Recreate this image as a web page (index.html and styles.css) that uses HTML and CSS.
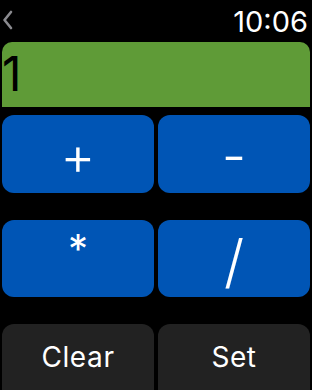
FILE: index.html
```html
<!DOCTYPE html>
<html lang="en">
  <head>
    <meta charset="utf-8">
    <title>Calc</title>
    <link rel="stylesheet" href="styles.css">
  </head>
  <body>
    <div class="screen">
      <div class="topbar">
        <svg class="back" width="12" height="20" viewBox="0 0 12 20">
          <polyline points="9,2 2.5,10 9,18" fill="none" stroke="#8a8a8f" stroke-width="2.6" stroke-linecap="round" stroke-linejoin="round"/>
        </svg>
        <span class="clock">10:06</span>
      </div>
      <div class="display">1</div>
      <div class="keys">
        <button class="key op">+</button>
        <button class="key op">-</button>
        <button class="key op star">*</button>
        <button class="key op slash">/</button>
        <button class="key action">Clear</button>
        <button class="key action">Set</button>
      </div>
    </div>
  </body>
</html>
```

FILE: styles.css
```css
html, body {
  margin: 0;
  height: 100%;
  background: #000;
  font-family: Inter, "Noto Sans", sans-serif;
  overflow: hidden;
}
.screen {
  display: flex;
  flex-direction: column;
  padding: 0 2px;
}
.topbar {
  height: 42px;
  display: flex;
  justify-content: space-between;
  align-items: center;
}
.back {
  margin-top: -2px;
  margin-left: 0;
}
.clock {
  color: #fff;
  font-size: 29px;
  margin-right: 2px;
  margin-top: 1px;
}
.display {
  height: 65px;
  background: #5f9b37;
  border-radius: 10px 10px 0 0;
  color: #000;
  font-size: 48px;
  line-height: 64px;
  margin-bottom: 8px;
}
.keys {
  display: grid;
  grid-template-columns: 1fr 1fr;
  grid-template-rows: 78px 77px 66px;
  column-gap: 4px;
  row-gap: 27px;
}
.key {
  border: 0;
  border-radius: 12px;
  color: #fff;
  font-family: inherit;
  padding: 0;
}
.op {
  background: #0055b5;
  font-size: 54px;
  font-weight: 300;
  padding-top: 2px;
}
.star {
  font-size: 40px;
  font-weight: 400;
  padding-top: 0;
  padding-bottom: 20px;
}
.slash {
  font-size: 58px;
  padding-top: 4px;
}
.action {
  background: #222;
  font-size: 28px;
  letter-spacing: 0.6px;
  border-radius: 12px 12px 0 0;
  padding-bottom: 1px;
}
```
